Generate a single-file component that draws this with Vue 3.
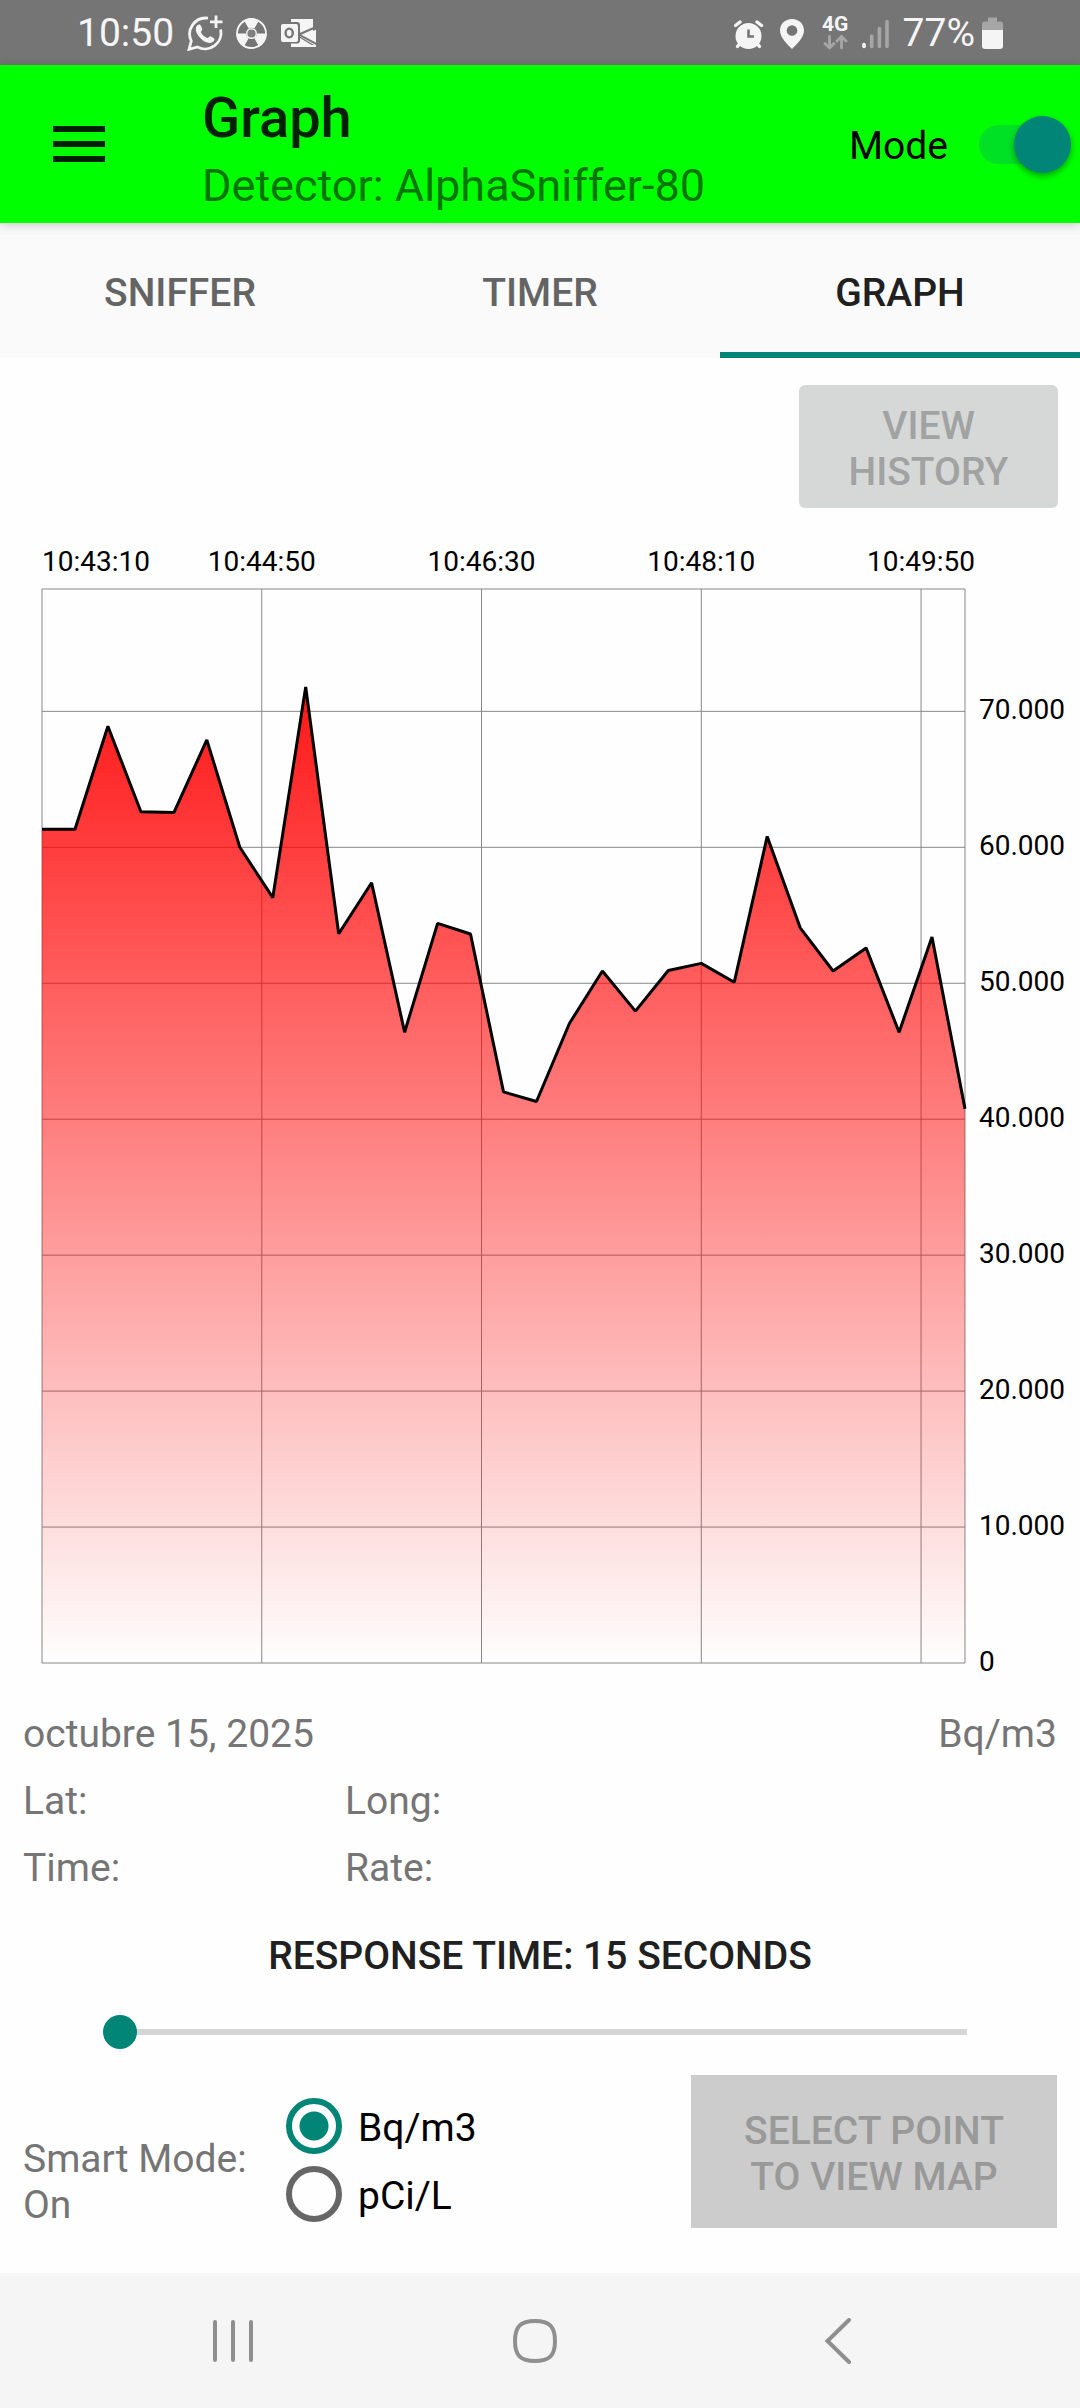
<script setup>
import { computed, ref } from 'vue'

const tabs = ['SNIFFER', 'TIMER', 'GRAPH']
const activeTab = ref('GRAPH')
const modeOn = ref(true)
const unit = ref('Bq/m3')
const responseTime = ref(15)

// Activity samples in thousands of Bq/m3, one every 15 seconds
const samples = [
  61.33, 61.33, 68.9, 62.61, 62.55, 67.9, 60, 56.3, 71.8, 53.64,
  57.4, 46.4, 54.4, 53.62, 42.01, 41.3, 47.04, 50.9, 47.95, 50.94,
  51.46, 50.08, 60.8, 54.08, 50.9, 52.6, 46.4, 53.4, 40.76
]
const maxValue = 79
const plot = { left: 42, right: 965, top: 81, bottom: 1155 }

const yOf = (v) => plot.bottom - (v / maxValue) * (plot.bottom - plot.top)
const xOf = (seconds) =>
  plot.left + (seconds / ((samples.length - 1) * 15)) * (plot.right - plot.left)

const times = [
  { label: '10:43:10', at: 0 },
  { label: '10:44:50', at: 100 },
  { label: '10:46:30', at: 200 },
  { label: '10:48:10', at: 300 },
  { label: '10:49:50', at: 400 }
]
const levels = [0, 10, 20, 30, 40, 50, 60, 70]

const linePoints = computed(() =>
  samples.map((v, i) => `${xOf(i * 15).toFixed(1)},${yOf(v).toFixed(1)}`).join(' ')
)
const areaPoints = computed(
  () => `${plot.left},${plot.bottom} ${linePoints.value} ${plot.right},${plot.bottom}`
)
</script>

<template>
  <div class="screen">
    <div class="status">
      <div class="status-group">
        <span>10:50</span>
        <svg width="36" height="36" viewBox="0 0 36 36" fill="none" stroke="#f5f5f5">
          <path d="M21 3.2A16 16 0 0 0 4.3 26L2 34.3L10.5 32A16 16 0 0 0 33.6 14.5" stroke-width="2.8" />
          <path d="M29 0.5V13M23 6.8H35.5" stroke-width="2.8" />
          <path d="M10 10.5c2-1.8 3.300-1.200 4 .5l1.200 3c.4 1.200-1.500 2.300-1.200 3.200c1.300 2.800 3.400 4.600 6.400 5.800c1 .2 1.900-2.200 3-1.800l3.300 1.700c1.400.8.7 2.700-.7 3.900c-3.500 2.700-8.500.5-12.500-3.500c-3.700-3.800-6.300-9-3.500-12.800z" fill="#f5f5f5" stroke="none" />
        </svg>
        <svg width="31" height="36" viewBox="0 0 31 36">
          <circle cx="15.500" cy="18.500" r="14.500" fill="none" stroke="#f5f5f5" stroke-width="1.800" />
          <g fill="#f5f5f5">
            <path d="M12.700 13.600L8 5.500A15 15 0 0 1 23 5.500L18.300 13.600A5.600 5.600 0 0 0 12.700 13.600z" />
            <path d="M12.700 13.600L8 5.500A15 15 0 0 1 23 5.500L18.300 13.600A5.600 5.600 0 0 0 12.700 13.600z" transform="rotate(120 15.500 18.500)" />
            <path d="M12.700 13.600L8 5.500A15 15 0 0 1 23 5.500L18.300 13.600A5.600 5.600 0 0 0 12.700 13.600z" transform="rotate(240 15.500 18.500)" />
          </g>
          <circle cx="15.500" cy="18.500" r="4.800" fill="#808080" stroke="#f5f5f5" stroke-width="1.400" />
        </svg>
        <svg width="37" height="36" viewBox="0 0 37 36">
          <path d="M11 4h22v12l3-1.500V32H11z" fill="#f5f5f5" />
          <path d="M19 19.500L36 12M19 19.500L37 29.500" stroke="#757575" stroke-width="2" />
          <path d="M33 3v10l4-1V3z" fill="#757575" />
          <path d="M20 21.500L34 30H20z" fill="#757575" />
          <path d="M20 23L35 32H11V28H20z" fill="#f5f5f5" />
          <rect x="-.5" y="7" width="20.500" height="21.500" rx="3" fill="#757575" />
          <rect x="1" y="9" width="17" height="18" rx="2" fill="#f5f5f5" />
          <ellipse cx="9.200" cy="18" rx="3.600" ry="4.400" fill="none" stroke="#757575" stroke-width="2.400" />
        </svg>
      </div>
      <div class="status-group">
        <svg width="32" height="36" viewBox="0 0 32 36" fill="none" stroke="#f5f5f5" stroke-linecap="round">
          <circle cx="14.500" cy="21" r="13" fill="#f5f5f5" stroke="none" />
          <path d="M1.500 10.500L6 7M27.500 10.500L23 7" stroke-width="3.400" />
          <path d="M5.500 29L3.500 31.500M23.500 29L25.500 31.500" stroke-width="3.400" />
          <path d="M14.500 14.500V21.500H20" stroke="#757575" stroke-width="2.600" stroke-linecap="butt" />
        </svg>
        <svg width="29" height="36" viewBox="0 0 29 36">
          <path d="M12 4C5 4 0 9 0 15.600C0 23 8 30 12 34C16 30 24 23 24 15.600C24 9 19 4 12 4zM12 10.200a5.300 5.300 0 0 1 0 10.600a5.300 5.300 0 0 1 0-10.600z" fill="#f5f5f5" fill-rule="evenodd" />
        </svg>
        <span class="network">
          <span>4G</span>
          <svg width="25" height="15" viewBox="0 0 25 15" fill="none" stroke="#a6a6a6" stroke-width="2.800" stroke-linecap="round" stroke-linejoin="round">
            <path d="M6.500 1.500V13M2 8.500L6.500 13L11 8.500M18.500 13V1.500M14 6L18.500 1.500L23 6" />
          </svg>
        </span>
        <svg width="27" height="36" viewBox="0 0 27 36" stroke-width="3.600" stroke-linecap="round">
          <path d="M2 29.500V31.500" stroke="#f5f5f5" />
          <path d="M9.700 21V31.500M17.400 13.500V31.500M25 6.500V31.500" stroke="#a6a6a6" />
        </svg>
        <span class="battery">
          <span>77%</span>
          <svg width="21" height="36" viewBox="0 0 21 36">
            <path d="M6 2.500h9v4h3a3 3 0 0 1 3 3V16H0V9.500a3 3 0 0 1 3-3h3z" fill="#a6a6a6" />
            <path d="M0 15h21v16a3 3 0 0 1-3 3H3a3 3 0 0 1-3-3z" fill="#f5f5f5" />
          </svg>
        </span>
      </div>
    </div>

    <header class="appbar">
      <button class="menu" aria-label="Menu">
        <svg width="52" height="36" viewBox="0 0 52 36" fill="#002100">
          <path d="M0 0h52v6H0zM0 15h52v6H0zM0 30h52v6H0z" />
        </svg>
      </button>
      <div class="titles">
        <h1>Graph</h1>
        <p>Detector: AlphaSniffer-80</p>
      </div>
      <label class="mode">
        <span>Mode</span>
        <input v-model="modeOn" type="checkbox" role="switch" />
      </label>
    </header>

    <nav class="tabs">
      <button
        v-for="tab in tabs"
        :key="tab"
        :class="{ active: tab === activeTab }"
        @click="activeTab = tab"
      >{{ tab }}</button>
    </nav>

    <main>
      <button class="history" disabled>VIEW HISTORY</button>

      <svg class="chart" viewBox="0 0 1080 1180">
        <defs>
          <linearGradient id="area" gradientUnits="userSpaceOnUse" x1="0" :y1="plot.top" x2="0" :y2="plot.bottom">
            <stop offset="0" stop-color="#f00" />
            <stop offset="1" stop-color="#f00" stop-opacity="0" />
          </linearGradient>
        </defs>
        <g class="grid">
          <line v-for="t in times" :key="t.label" :x1="xOf(t.at)" :x2="xOf(t.at)" :y1="plot.top" :y2="plot.bottom" />
          <line v-for="l in levels" :key="l" :x1="plot.left" :x2="plot.right" :y1="yOf(l)" :y2="yOf(l)" />
          <path :d="`M${plot.left} ${plot.top}H${plot.right}V${plot.bottom}`" />
        </g>
        <polygon :points="areaPoints" fill="url(#area)" />
        <polyline class="trace" :points="linePoints" />
        <text
          v-for="(t, i) in times"
          :key="t.label"
          :x="xOf(t.at)"
          y="63"
          :text-anchor="i ? 'middle' : 'start'"
        >{{ t.label }}</text>
        <text v-for="l in levels" :key="l" x="979" :y="yOf(l) + 8">{{ l ? `${l}.000` : '0' }}</text>
      </svg>

      <div class="info">
        <span class="date">octubre 15, 2025</span>
        <span>Bq/m3</span>
        <span>Lat:</span>
        <span class="wide">Long:</span>
        <span>Time:</span>
        <span class="wide">Rate:</span>
      </div>

      <label class="response" for="response-time">RESPONSE TIME: {{ responseTime }} SECONDS</label>
      <input id="response-time" v-model="responseTime" class="slider" type="range" min="15" max="300" />

      <div class="bottom">
        <p class="smart">Smart Mode: On</p>
        <div class="units" role="radiogroup" aria-label="Unit">
          <label><input v-model="unit" type="radio" name="unit" value="Bq/m3" /><span>Bq/m3</span></label>
          <label><input v-model="unit" type="radio" name="unit" value="pCi/L" /><span>pCi/L</span></label>
        </div>
        <button class="map" disabled>SELECT POINT<br />TO VIEW MAP</button>
      </div>
    </main>

    <footer class="sysnav">
      <button aria-label="Recents">
        <svg width="46" height="46" viewBox="0 0 46 46"><path d="M5 4V42M23 4V42M41 4V42" /></svg>
      </button>
      <button aria-label="Home">
        <svg width="46" height="46" viewBox="0 0 46 46"><path d="M23 3C37 3 43 8 43 23S37 43 23 43S3 38 3 23S9 3 23 3z" /></svg>
      </button>
      <button aria-label="Back">
        <svg width="46" height="46" viewBox="0 0 46 46"><path d="M34 2L12.500 23L34 44" /></svg>
      </button>
    </footer>
  </div>
</template>

<style>
body {
  background: #fefefe;
}
</style>

<style scoped>
.screen {
  display: flex;
  flex-direction: column;
  min-height: 100vh;
  font: 400 39px/46px Roboto, sans-serif;
  color: #000;
}

button {
  border: 0;
  padding: 0;
  background: none;
  font: inherit;
  color: inherit;
}

h1,
p {
  margin: 0;
}

svg {
  display: block;
}

.status {
  display: flex;
  justify-content: space-between;
  align-items: center;
  height: 65px;
  padding: 0 77px;
  background: #757575;
  color: #f5f5f5;
}

.status-group {
  display: flex;
  align-items: center;
  gap: 13px;
}

.status-group + .status-group {
  gap: 14px;
}

.battery {
  display: flex;
  align-items: center;
  gap: 7px;
}

.network {
  display: flex;
  flex-direction: column;
  align-items: center;
  gap: 2px;
  width: 25px;
  font: 700 21px/18px Roboto, sans-serif;
}

.appbar {
  position: relative;
  display: flex;
  align-items: center;
  height: 158px;
  padding: 0 9px 0 53px;
  background: #0f0;
  box-shadow: 0 2px 10px rgba(0, 0, 0, 0.2);
}

.menu {
  margin-right: 97px;
}

.titles {
  flex: 1;
  padding-top: 8px;
}

.titles h1 {
  margin-bottom: 8px;
  font-size: 56px;
  font-weight: 500;
  line-height: 66px;
  color: #002100;
}

.titles p {
  font-size: 45px;
  line-height: 53px;
  color: #007500;
}

.mode {
  display: flex;
  align-items: center;
  gap: 31px;
}

.mode span,
.units span {
  padding-top: 4px;
}

.mode input {
  position: relative;
  width: 92px;
  height: 57px;
  margin: 0;
  appearance: none;
}

.mode input::before {
  content: '';
  position: absolute;
  inset: 9px;
  left: 0;
  border-radius: 20px;
  background: #00e024;
}

.mode input::after {
  content: '';
  position: absolute;
  top: 0;
  left: 0;
  width: 57px;
  height: 57px;
  border-radius: 50%;
  background: #fafafa;
  box-shadow: 0 3px 6px rgba(0, 0, 0, 0.35);
}

.mode input:checked::after {
  left: auto;
  right: 0;
  background: #008577;
}

.tabs {
  display: grid;
  grid-template-columns: repeat(3, 1fr);
  height: 135px;
  background: #fafafa;
}

.tabs button {
  padding-top: 4px;
  font-weight: 500;
  color: #646464;
}

.tabs .active {
  color: #202020;
  box-shadow: inset 0 -6px #008577;
}

main {
  display: flex;
  flex-direction: column;
  flex: 1;
  padding: 27px 0 45px;
}

.history {
  align-self: flex-end;
  width: 259px;
  height: 123px;
  margin-right: 22px;
  padding: 4px 40px 0;
  border-radius: 6px;
  background: #d6d8d7;
  font-weight: 500;
  color: #a1a2a2;
}

.chart {
  width: 100%;
  height: auto;
  font-size: 28px;
}

.grid {
  fill: none;
  stroke: #888;
  stroke-width: 1;
}

.trace {
  fill: none;
  stroke: #000;
  stroke-width: 3;
  stroke-linejoin: bevel;
}

.info {
  display: grid;
  grid-template-columns: 322px 1fr auto;
  row-gap: 21px;
  padding: 23px 23px 0;
  color: #757575;
}

.date,
.wide {
  grid-column: span 2;
}

.response {
  align-self: center;
  margin-top: 42px;
  font-weight: 500;
  color: #202020;
}

.slider {
  height: 34px;
  margin: 36px 96px 26px 103px;
  appearance: none;
  background: linear-gradient(#d6d6d6, #d6d6d6) center / calc(100% - 34px) 6px no-repeat;
}

.slider::-webkit-slider-thumb {
  width: 34px;
  height: 34px;
  border-radius: 50%;
  appearance: none;
  background: #008577;
}

.bottom {
  display: grid;
  grid-template-columns: 263px 1fr 366px;
  align-items: end;
  padding: 0 23px;
}

.smart {
  padding-right: 20px;
  color: #757575;
}

.units label {
  display: flex;
  align-items: center;
  gap: 16px;
  height: 68px;
}

.units input {
  width: 56px;
  height: 56px;
  margin: 0;
  border: 6px solid #666;
  border-radius: 50%;
  appearance: none;
}

.units input:checked {
  border-color: #008577;
  background: radial-gradient(circle, #008577 14px, transparent 15px);
}

.map {
  height: 153px;
  padding-top: 4px;
  background: #ccc;
  font-weight: 500;
  color: #999;
}

.sysnav {
  display: grid;
  grid-template-columns: repeat(3, 1fr);
  height: 135px;
  padding: 0 91px 0 82px;
  background: #f5f5f5;
}

.sysnav button {
  display: flex;
  justify-content: center;
  align-items: center;
}

.sysnav path {
  fill: none;
  stroke: #8f8f8f;
  stroke-width: 4;
  stroke-linecap: round;
}
</style>
